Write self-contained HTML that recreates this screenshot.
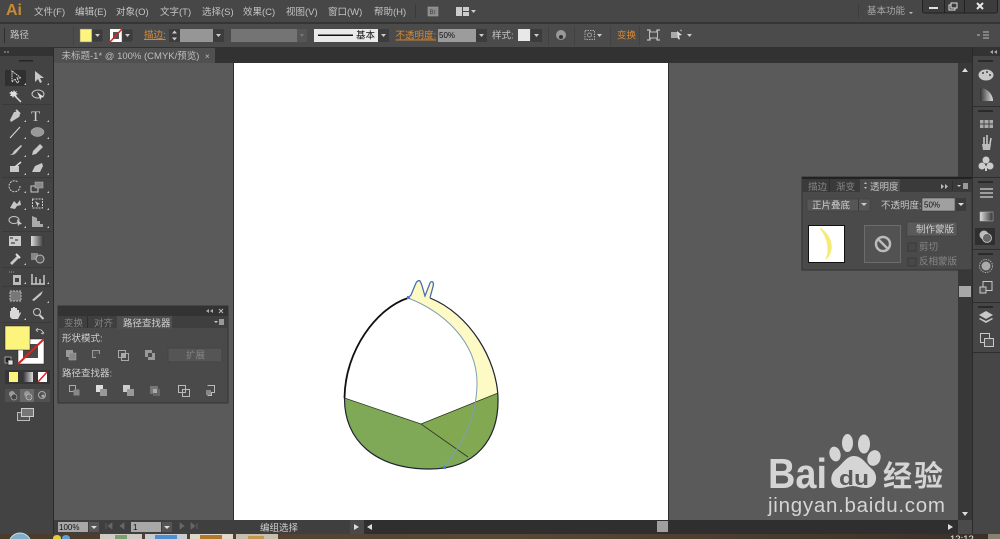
<!DOCTYPE html>
<html><head><meta charset="utf-8">
<style>
html,body{margin:0;padding:0;background:#5a5a5a;overflow:hidden}
svg{display:block;filter:blur(.35px)}
text{font-family:"Liberation Sans","Noto Sans CJK SC",sans-serif;font-size:9.5px;fill:#c4c4c4}
.o{fill:#d88a35}
.d{fill:#858585}
.b{fill:#111}
.i{fill:none;stroke:#c8c8c8;stroke-width:1}
.f{fill:#c8c8c8;stroke:none}
.g{fill:#8a8a8a;stroke:none}
.ln{stroke:#353535;stroke-width:1}
</style></head>
<body>
<svg width="1000" height="539" viewBox="0 0 1000 539" xmlns="http://www.w3.org/2000/svg">
<defs><linearGradient id="gr" x1="0" x2="1"><stop offset="0" stop-color="#333"/><stop offset="1" stop-color="#ddd"/></linearGradient>
<linearGradient id="tb" x1="0" x2="1"><stop offset="0" stop-color="#4a3a2c"/><stop offset=".5" stop-color="#5a4836"/><stop offset="1" stop-color="#3a3028"/></linearGradient></defs>
<!-- base -->
<rect width="1000" height="539" fill="#5a5a5a"/>
<rect width="1000" height="22" fill="#474747"/>
<rect y="22" width="1000" height="2" fill="#353535"/>
<rect y="24" width="1000" height="23" fill="#4b4b4b"/>
<rect y="47" width="1000" height="16" fill="#323232"/>
<!-- menu -->
<text x="6" y="15" style="font-size:16px;font-weight:bold;fill:#c88a35">Ai</text>
<text x="34" y="15">文件(F)</text><text x="75" y="15">编辑(E)</text><text x="116" y="15">对象(O)</text><text x="160" y="15">文字(T)</text><text x="202" y="15">选择(S)</text><text x="243" y="15">效果(C)</text><text x="286" y="15">视图(V)</text><text x="328" y="15">窗口(W)</text><text x="374" y="15">帮助(H)</text>
<rect x="415" y="4" width="1" height="14" fill="#3a3a3a"/>
<rect x="428" y="7" width="10" height="9" fill="#8a8a8a" stroke="#aaa" stroke-width=".5"/>
<text x="429.500" y="14" style="font-size:6px;fill:#444">Br</text>
<rect x="456" y="7" width="6" height="9" fill="#ccc"/><rect x="463" y="7" width="6" height="4" fill="#ccc"/><rect x="463" y="12" width="6" height="4" fill="#ccc"/>
<path d="M471 10h5l-2.500 3z" fill="#ccc"/>
<rect x="858" y="4" width="1" height="14" fill="#3d3d3d"/>
<text x="867" y="14" style="fill:#a8a8a8">基本功能</text>
<path d="M909 12h4l-2 2z" fill="#bbb"/>
<rect x="922.500" y="-2" width="75" height="15" rx="2" fill="#3c3c3c" stroke="#222"/>
<rect x="929" y="7" width="9" height="2" fill="#e0e0e0"/>
<rect x="949" y="5" width="6" height="5" fill="none" stroke="#e0e0e0"/><rect x="951" y="3" width="6" height="5" fill="#3c3c3c" stroke="#e0e0e0"/>
<path d="M977 3l6 6M983 3l-6 6" stroke="#e8e8e8" stroke-width="2"/>
<rect x="944" y="0" width="1" height="13" fill="#222"/><rect x="964" y="0" width="1" height="13" fill="#222"/>
<!-- control bar -->
<rect x="4" y="28" width="1" height="15" fill="#2e2e2e"/>
<text x="10" y="38">路径</text>
<rect x="73" y="26" width="1" height="20" fill="#424242"/>
<rect x="80" y="29" width="12" height="13" fill="#fdf47e" stroke="#777" stroke-width=".5"/>
<rect x="92" y="29" width="11" height="13" fill="#3c3c3c" stroke="#555" stroke-width=".5"/><path d="M95 34h5l-2.500 3z" fill="#ccc"/>
<rect x="110" y="29" width="12" height="13" fill="#fff"/><rect x="113" y="32" width="6" height="7" fill="#555"/><path d="M110 42l12-13" stroke="#d22" stroke-width="1.500"/>
<rect x="122" y="29" width="11" height="13" fill="#3c3c3c" stroke="#555" stroke-width=".5"/><path d="M125 34h5l-2.500 3z" fill="#ccc"/>
<text x="144" y="38" class="o" text-decoration="underline">描边:</text>
<rect x="169" y="29" width="11" height="13" fill="#3c3c3c"/><path d="M172 33.500h5l-2.500-3zM172 37.500h5l-2.500 3z" fill="#ccc"/>
<rect x="180" y="29" width="33" height="13" fill="#969696"/>
<rect x="213" y="29" width="11" height="13" fill="#3c3c3c"/><path d="M216 34h5l-2.500 3z" fill="#ccc"/>
<rect x="231" y="29" width="66" height="13" fill="#747474"/>
<rect x="297" y="29" width="10" height="13" fill="#555"/><path d="M300 34h4l-2 3z" fill="#777"/>
<rect x="314" y="29" width="64" height="13" fill="#eaeaea"/>
<rect x="318" y="34.500" width="35" height="1.500" fill="#111"/>
<text x="356" y="38.500" class="b">基本</text>
<rect x="378" y="29" width="11" height="13" fill="#3c3c3c"/><path d="M381 34h5l-2.500 3z" fill="#ccc"/>
<text x="395.500" y="38.500" class="o" text-decoration="underline">不透明度:</text>
<rect x="438" y="29" width="38" height="13" fill="#9c9c9c"/><text x="439" y="38" style="font-size:8px;fill:#111">50%</text>
<rect x="476" y="29" width="11" height="13" fill="#3c3c3c"/><path d="M479 34h5l-2.500 3z" fill="#ccc"/>
<text x="492" y="38.500">样式:</text>
<rect x="518" y="29" width="12" height="12" fill="#e8e8e8"/>
<rect x="531" y="29" width="11" height="13" fill="#3c3c3c"/><path d="M534 34h5l-2.500 3z" fill="#ccc"/>
<rect x="548" y="26" width="1" height="20" fill="#424242"/>
<circle cx="561" cy="35" r="5" fill="#999"/><circle cx="561" cy="37" r="2" fill="#333"/>
<rect x="574" y="26" width="1" height="20" fill="#424242"/>
<rect x="585" y="30.500" width="9.500" height="9" fill="none" stroke="#aaa" stroke-dasharray="1.500 1"/><circle cx="589.500" cy="35" r="2" fill="none" stroke="#999"/>
<path d="M597 34h5l-2.500 3z" fill="#ccc"/>
<rect x="610" y="26" width="1" height="20" fill="#424242"/>
<text x="617" y="38.500" class="o">变换</text>
<rect x="639" y="26" width="1" height="20" fill="#424242"/>
<rect x="649.500" y="32" width="8" height="6" fill="none" stroke="#bbb"/><path d="M647 30h3v2M660 30h-3v2M647 40h3v-2M660 40h-3v-2" fill="none" stroke="#ddd"/>
<rect x="671" y="32" width="7" height="6" fill="#aaa"/><path d="M677 31l5 4-3 .500 1 4-2-.500z" fill="#ddd"/><path d="M680 30l2 1" stroke="#aaa"/>
<path d="M687 34h5l-2.500 3z" fill="#ccc"/>
<path d="M977 35h3M983 32h6M983 35h6M983 38h6" stroke="#bbb" stroke-width="1"/>
<!-- tab -->
<rect x="54" y="48" width="161" height="15" fill="#505050"/>
<text x="61.500" y="59" style="fill:#bdbdbd">未标题-1* @ 100% (CMYK/预览)</text>
<text x="205" y="59" style="font-size:8px">×</text>
<!-- left toolbar -->
<rect x="0" y="47" width="53" height="487" fill="#434343"/>
<rect x="0" y="47" width="53" height="9" fill="#333"/>
<path d="M6 52l-2 0M9 52l-2 0" stroke="#aaa"/>
<rect x="19" y="60" width="14" height="1.500" fill="#252525"/>
<rect x="53" y="47" width="1" height="487" fill="#2a2a2a"/>
<rect x="5" y="70" width="21" height="16" fill="#303030"/>
<!-- selection -->
<path d="M12 71v11l3-3 2 4 2-1-2-4h4z" fill="none" stroke="#ddd" stroke-dasharray="1.500 .7"/>
<path d="M35 71v11l3-3 2 4 2-1-2-4h4z" fill="#c8c8c8"/>
<path d="M11 91l2 1 1-2 1 2 2-1-1 2 2 1-2 1 1 2-3-1-1 2-1-2-2 0 1-2-2-1 2-1z" fill="#ddd"/><path d="M15 96l6 6" stroke="#ddd" stroke-width="1.500"/>
<ellipse cx="38" cy="94" rx="6" ry="4" class="i"/><path d="M37 92l7 5-3 .500 0 3z" fill="#ddd"/>
<path d="M10 120l4-8 3 0 3 3-1 2-8 5z" class="f"/><path d="M16 110l4 4" stroke="#ccc" stroke-width="2"/>
<text x="31" y="121" style="font-family:'Liberation Serif',serif;font-size:15px;fill:#cfcfcf">T</text>
<path d="M10 138l10-11" stroke="#ddd"/>
<ellipse cx="37.500" cy="132" rx="6.500" ry="4.500" fill="#999" stroke="#bbb" stroke-width=".5"/>
<path d="M9 155c3 0 4-2 5-4l7-6 1 1-6 7c-2 2-4 2-7 2z" class="f"/>
<path d="M32 155l1-4 7-7 3 3-7 7z" class="f"/>
<path d="M10 166h9v6h-9z" class="f"/><path d="M15 167l6-5" stroke="#ddd" stroke-width="1.500"/>
<path d="M32 172l3-6 7-3 1 3-3 6z" class="f"/>
<path d="M20 186a5.500 5.500 0 1 1-2-4" fill="none" stroke="#ccc" stroke-dasharray="2 1"/>
<rect x="31" y="186" width="7" height="6" class="i"/><rect x="35" y="182" width="8" height="6" fill="#888" stroke="#bbb" stroke-width=".5"/>
<path d="M10 208l4-7 3 3 3-4 1 5-4 1-2 3z" class="f"/>
<rect x="32.500" y="199" width="10" height="9" fill="none" stroke="#ccc" stroke-dasharray="2 1"/><path d="M35 201l5 3-2 .500 0 3z" fill="#ccc"/>
<ellipse cx="14" cy="220" rx="5" ry="3.500" class="i"/><path d="M17 219l5 5-3 .500-1 2z" class="f"/>
<path d="M32 216v11h11v-3h-3v-3h-3v-3z" fill="#aaa"/>
<rect x="9" y="236" width="12" height="10" fill="#ccc"/><path d="M10 238h3M15 240h3M11 243h4" stroke="#444" stroke-width="1.200"/>
<rect x="31" y="236" width="13" height="10" fill="url(#gr)" transform="rotate(180 37.500 241)"/>
<path d="M10 263l7-7 2 2-7 7z" class="f"/><path d="M16 254l4 4" stroke="#ddd" stroke-width="2"/>
<rect x="31" y="253" width="7" height="7" fill="#888"/><circle cx="40" cy="259" r="4" fill="#555" stroke="#bbb"/>
<rect x="13" y="275" width="8" height="10" fill="#bbb"/><rect x="15" y="278" width="4" height="4" fill="#444"/><path d="M9 272h6" stroke="#999" stroke-dasharray="1 1"/>
<path d="M32 284v-10M36 284v-7M40 284v-5M44 284v-9M31 284h14" stroke="#c8c8c8" stroke-width="1.500"/>
<rect x="10" y="291" width="11" height="10" fill="#777" stroke="#bbb" stroke-dasharray="2 1"/>
<path d="M32 300l8-7 3-2-2 4-7 6z" class="f"/>
<path d="M10 317v-6l1 0v-3l2 0v-1l2 0 0 1 2 0v2l2 0v4l1-2 1 1-3 6h-6z" fill="#d8d8d8"/>
<circle cx="37" cy="312" r="3.500" class="i"/><path d="M39.500 315l4 4" stroke="#ccc" stroke-width="2"/>
<g fill="#ccc"><path d="M24 85l2 0v-2zM47 85l2 0v-2zM24 122l2 0v-2zM47 122l2 0v-2zM24 139l2 0v-2zM47 139l2 0v-2zM24 157l2 0v-2zM47 157l2 0v-2zM24 175l2 0v-2zM47 175l2 0v-2zM24 193l2 0v-2zM47 193l2 0v-2zM24 210l2 0v-2zM47 210l2 0v-2zM24 228l2 0v-2zM47 228l2 0v-2zM24 265l2 0v-2zM24 284l2 0v-2zM47 284l2 0v-2zM47 303l2 0v-2zM24 320l2 0v-2z"/></g>
<g fill="#3a3a3a"><rect x="2" y="104" width="50" height="1"/><rect x="2" y="177" width="50" height="1"/><rect x="2" y="231" width="50" height="1"/><rect x="2" y="267" width="50" height="1"/><rect x="2" y="286" width="50" height="1"/><rect x="2" y="322" width="50" height="1"/></g>
<!-- colors -->
<rect x="18" y="339" width="26" height="25" fill="#fff" stroke="#222" stroke-width=".5"/>
<rect x="23" y="344" width="15" height="14" fill="#4a4a4a"/>
<path d="M18 364l26-25" stroke="#d22" stroke-width="2"/>
<rect x="5" y="326" width="25" height="24" fill="#fdf47e" stroke="#222" stroke-width=".5"/>
<path d="M37 330a4 4 0 0 1 6 4M38 328l-2 2 2 2M44 332l-1 2-2-1" fill="none" stroke="#ccc" stroke-width=".8"/>
<rect x="5" y="357" width="6" height="6" fill="#222" stroke="#ccc" stroke-width=".7"/><rect x="8" y="360" width="5" height="5" fill="#ddd" stroke="#222" stroke-width=".7"/>
<rect x="5" y="370" width="45" height="14" fill="#363636"/>
<rect x="9" y="372" width="9" height="10" fill="#fdf47e"/>
<rect x="23" y="372" width="10" height="10" fill="url(#gr)"/>
<rect x="38" y="372" width="9" height="10" fill="#fff"/><path d="M38 382l9-10" stroke="#d22" stroke-width="1.500"/>
<rect x="5" y="389" width="45" height="13" fill="#505050"/>
<rect x="20" y="389" width="14" height="13" fill="#6a6a6a"/>
<circle cx="12" cy="394" r="3" fill="#999"/><circle cx="14" cy="397" r="3" fill="#444" stroke="#bbb" stroke-width=".6"/>
<circle cx="27" cy="394" r="3" fill="#999"/><circle cx="29" cy="397" r="3" fill="#777" stroke="#ccc" stroke-width=".6"/>
<circle cx="42" cy="395" r="3.500" fill="none" stroke="#aaa"/><circle cx="43" cy="396" r="1.500" fill="#aaa"/>
<rect x="17.500" y="412.500" width="12" height="8" fill="#555" stroke="#bbb"/><rect x="21.500" y="408.500" width="12" height="8" fill="#777" stroke="#ccc"/>
<!-- artboard -->
<rect x="234" y="63" width="434" height="457" fill="#fff"/>
<rect x="233" y="63" width="1" height="457" fill="#2e2e2e"/><rect x="668" y="63" width="1" height="457" fill="#2e2e2e"/>
<!-- illustration -->
<path d="M408 298C440 310 478 340 477 385L476 404 498 393C497 360 470 314 430 298C431 293 433 288 433.500 284C433 281 431 281 430 283L425 296C423 290 422 284 420 281C418 280 417 281 416 283L411 295z" fill="#fefac6"/>
<path d="M344.500 386L344.500 398 421 424 498 393C500 440 475 469 430 469C375 469 343 440 344.500 398z" fill="#7fa857"/>
<path d="M421 424L498 393C500 430 487 447 468 457z" fill="#82a852"/>
<path d="M344.500 398L421 424 468 457M421 424L498 393" fill="none" stroke="#2c3a20" stroke-width=".8"/>
<path d="M408 298C377 308 345 350 344.500 398" fill="none" stroke="#111" stroke-width="1.800"/>
<path d="M344.500 398C344 440 375 469 430 469C475 469 499 440 498 398C497 360 470 314 430 298" fill="none" stroke="#1c2430" stroke-width="1.200"/>
<path d="M408 298L411 295 416 283C417 281 419 280 420 281C422 284 423 290 425 296L430 283C431 281 433 281 433.500 284C433 288 431 293 430 298" fill="none" stroke="#4a6fb0" stroke-width="1.300"/>
<path d="M408 298C440 310 478 340 477 385C476 420 462 445 444 467" fill="none" stroke="#7d9fb5" stroke-width="1"/>
<rect x="407" y="296" width="3" height="3" fill="#4a7ad8"/><rect x="443" y="466" width="3" height="3" fill="#4a7ad8"/>
<!-- vertical scroll -->
<rect x="958" y="63" width="14" height="457" fill="#383838"/>
<path d="M962 72l3-4 3 4z" fill="#ddd"/><path d="M962 512l3 4 3-4z" fill="#ddd"/>
<rect x="959" y="286" width="12" height="11" fill="#a8a8a8"/>
<!-- right dock -->
<rect x="972" y="47" width="28" height="487" fill="#464646"/>
<rect x="972" y="47" width="28" height="9" fill="#333"/>
<path d="M990 52l3-2v4zM994 52l3-2v4z" fill="#aaa"/>
<rect x="972" y="47" width="1" height="487" fill="#2a2a2a"/>
<g fill="#2e2e2e"><rect x="973" y="106" width="27" height="1"/><rect x="973" y="177" width="27" height="1"/><rect x="973" y="249" width="27" height="1"/><rect x="973" y="302" width="27" height="1"/><rect x="973" y="352" width="27" height="1"/></g>
<g fill="#2a2a2a"><rect x="978" y="60" width="15" height="2"/><rect x="978" y="110" width="15" height="2"/><rect x="978" y="181" width="15" height="2"/><rect x="978" y="253" width="15" height="2"/><rect x="978" y="306" width="15" height="2"/></g>
<ellipse cx="986" cy="75" rx="7.500" ry="5.500" fill="#c8c8c8"/><g fill="#444"><circle cx="983" cy="73" r="1"/><circle cx="987" cy="72" r="1"/><circle cx="990" cy="75" r="1"/></g>
<path d="M980 88c7 0 13 6 13 13h-13z" fill="url(#gr)"/>
<rect x="980" y="120" width="13" height="8" fill="#aaa"/><path d="M984 120v8M989 120v8M980 124h13" stroke="#444"/>
<path d="M983 150h7l1-6h-9z" fill="#bbb"/><path d="M984 144v-7M987 144v-9M990 144l1-6" stroke="#ccc" stroke-width="1.500"/>
<circle cx="986" cy="160" r="3.500" fill="#ccc"/><circle cx="982" cy="166" r="3.500" fill="#ccc"/><circle cx="990" cy="166" r="3.500" fill="#ccc"/><rect x="985" y="166" width="2" height="5" fill="#ccc"/>
<path d="M980 189h13M980 193h13M980 197h13" stroke="#bbb" stroke-width="1.500"/>
<rect x="980" y="212" width="13" height="9" fill="url(#gr)" transform="rotate(180 986.500 216.500)" stroke="#bbb" stroke-width=".5"/>
<rect x="975" y="228" width="20" height="17" fill="#2f2f2f"/>
<circle cx="984" cy="235" r="4.500" fill="#bbb"/><circle cx="987" cy="238" r="4.500" fill="#666" stroke="#ccc" stroke-width=".8"/>
<circle cx="986" cy="266" r="4.500" fill="#aaa"/><circle cx="986" cy="266" r="6.500" fill="none" stroke="#aaa" stroke-dasharray="1.500 1"/>
<rect x="983" y="281.500" width="9" height="9" class="i"/><rect x="980" y="287" width="6" height="6" fill="#555" stroke="#ccc"/>
<path d="M986 311l7 4-7 4-7-4z" fill="#c8c8c8"/><path d="M979 319l7 4 7-4-1-1-6 3-6-3z" fill="#c8c8c8"/>
<rect x="980.500" y="333.500" width="9" height="9" class="i"/><rect x="984.500" y="338.500" width="9" height="8" fill="#555" stroke="#c8c8c8"/>
<!-- transparency panel -->
<rect x="802" y="177" width="170" height="93" fill="#4a4a4a" stroke="#333"/>
<rect x="802" y="177" width="170" height="2" fill="#222"/>
<rect x="802" y="179" width="170" height="13" fill="#3a3a3a"/>
<rect x="860" y="179" width="40" height="14" fill="#4a4a4a"/>
<rect x="829" y="179" width="1" height="13" fill="#2e2e2e"/>
<text x="808" y="190" class="d">描边</text><text x="836" y="190" class="d">渐变</text>
<text x="870" y="190" style="fill:#c4c4c4">透明度</text>
<path d="M864 184l1.500-2 1.500 2zM864 187l1.500 2 1.500-2z" fill="#bbb"/>
<path d="M941 184l3 2.500-3 2.500zM945 184l3 2.500-3 2.500z" fill="#bbb"/>
<rect x="952" y="181" width="1" height="9" fill="#2e2e2e"/>
<path d="M957 185h4l-2 2z" fill="#ccc"/><rect x="963" y="183" width="5" height="6" fill="#999"/>
<rect x="807" y="199" width="63" height="12" fill="#565656" stroke="#3a3a3a" stroke-width=".5"/>
<text x="812" y="208.500" style="fill:#d0d0d0">正片叠底</text>
<rect x="858" y="199" width="1" height="12" fill="#3a3a3a"/><path d="M861 203h6l-3 3z" fill="#ccc"/>
<text x="881" y="208.500">不透明度:</text>
<rect x="922" y="198" width="33" height="13" fill="#a0a0a0" stroke="#333" stroke-width=".5"/><text x="924" y="207.500" style="font-size:8px;fill:#111">50%</text>
<rect x="956" y="198" width="10" height="13" fill="#3c3c3c"/><path d="M958 203h6l-3 3z" fill="#ddd"/>
<rect x="808.500" y="225.500" width="36" height="37" fill="#fff" stroke="#111"/>
<path d="M820 228C832 236 835 250 826 259C830 250 828 238 820 228z" fill="#f5ec78" stroke="#f5ec78"/>
<rect x="864.500" y="225.500" width="36" height="37" fill="#525252" stroke="#6c6c6c"/>
<circle cx="883" cy="244" r="7" fill="none" stroke="#bbb" stroke-width="2.500"/><path d="M878 239l10 10" stroke="#bbb" stroke-width="2.500"/>
<rect x="907" y="222" width="50" height="14" fill="#5a5a5a" stroke="#3a3a3a" stroke-width=".5"/>
<text x="916" y="232.500" style="fill:#d0d0d0">制作蒙版</text>
<rect x="908" y="243" width="8" height="8" fill="#484848" stroke="#3a3a3a"/>
<rect x="908" y="258" width="8" height="8" fill="#484848" stroke="#3a3a3a"/>
<text x="919" y="250" class="d">剪切</text><text x="919" y="264.500" class="d">反相蒙版</text>
<!-- pathfinder panel -->
<rect x="58" y="306" width="170" height="97" fill="#4a4a4a" stroke="#333"/>
<rect x="58" y="306" width="170" height="10" fill="#333"/>
<rect x="58" y="316" width="170" height="12" fill="#3f3f3f"/>
<rect x="117" y="316" width="55" height="13" fill="#4f4f4f"/>
<rect x="87" y="316" width="1" height="12" fill="#2e2e2e"/>
<path d="M206 311l3-2v4zM210 311l3-2v4z" fill="#aaa"/><path d="M219 309l4 4M223 309l-4 4" stroke="#bbb"/>
<text x="64" y="326.500" class="d">变换</text><text x="94" y="326.500" class="d">对齐</text><text x="123" y="326.500" style="fill:#cfcfcf">路径查找器</text>
<path d="M214 321h4l-2 2z" fill="#ccc"/><rect x="219" y="319" width="5" height="6" fill="#999"/>
<text x="62" y="341.500" style="fill:#cfcfcf">形状模式:</text>
<rect x="66" y="350" width="7" height="7" fill="#999"/><rect x="69" y="353" width="7" height="7" fill="#888" stroke="#aaa" stroke-width=".5"/>
<rect x="92.500" y="350.500" width="7" height="7" fill="#555" stroke="#999"/><rect x="96" y="354" width="7" height="7" fill="#4a4a4a"/>
<rect x="118.500" y="350.500" width="7" height="7" fill="none" stroke="#aaa"/><rect x="121.500" y="353.500" width="7" height="7" fill="none" stroke="#aaa"/><rect x="121.500" y="353.500" width="4" height="4" fill="#aaa"/>
<rect x="145" y="350" width="7" height="7" fill="#999"/><rect x="148" y="353" width="7" height="7" fill="#999"/><rect x="148" y="353" width="4" height="4" fill="#4a4a4a"/>
<rect x="168" y="348" width="54" height="14" fill="#555" stroke="#444"/>
<text x="186" y="358.500" class="d">扩展</text>
<text x="62" y="376.500" style="fill:#cfcfcf">路径查找器:</text>
<g><rect x="69.500" y="385.500" width="6" height="6" fill="none" stroke="#aaa"/><rect x="73.500" y="389.500" width="6" height="6" fill="#888"/>
<rect x="96" y="385" width="7" height="7" fill="#ddd"/><rect x="100" y="389" width="7" height="7" fill="#999"/>
<rect x="123" y="385" width="7" height="7" fill="#ccc"/><rect x="127" y="389" width="7" height="7" fill="#999"/>
<rect x="150" y="386" width="8" height="8" fill="#777"/><rect x="153" y="389" width="7" height="7" fill="#666"/><rect x="153" y="389" width="4" height="4" fill="#aaa"/>
<rect x="178.500" y="385.500" width="7" height="7" fill="none" stroke="#bbb"/><rect x="182.500" y="389.500" width="7" height="7" fill="none" stroke="#bbb"/>
<path d="M207.500 385.500h7v7h-3v3h-4" fill="none" stroke="#bbb"/><rect x="206" y="390" width="5" height="5" fill="#888"/></g>
<!-- watermark -->
<text x="768" y="488" textLength="59" lengthAdjust="spacingAndGlyphs" style="font-size:42px;font-weight:bold;fill:#d5d5d5">Bai</text>
<g fill="#d5d5d5">
<ellipse cx="835" cy="454" rx="5.500" ry="7.500" transform="rotate(-15 835 454)"/>
<ellipse cx="847.500" cy="443" rx="5.500" ry="9"/>
<ellipse cx="864" cy="444" rx="6" ry="9.500"/>
<ellipse cx="874" cy="458" rx="6.500" ry="8" transform="rotate(20 874 458)"/>
<path d="M854 456C862 456 866 464 872 469C879 475 877 488 866 488C860 488 857 486 853 486C848 486 845 488 840 488C830 488 829 476 835 470C842 465 846 456 854 456z"/>
</g>
<text x="839" y="485" textLength="30" lengthAdjust="spacingAndGlyphs" style="font-size:20px;font-weight:bold;fill:#5a5a5a">du</text>
<text x="883" y="486" textLength="60" style="font-size:29px;font-weight:bold;fill:#d5d5d5">经验</text>
<text x="768" y="512" textLength="177" style="font-size:20.500px;fill:#d5d5d5">jingyan.baidu.com</text>
<!-- status bar -->
<rect x="54" y="520" width="918" height="14" fill="#3f3f3f"/>
<rect x="0" y="520" width="54" height="14" fill="#434343"/>
<rect x="53" y="520" width="1" height="14" fill="#2a2a2a"/>
<rect x="58" y="522" width="30" height="10" fill="#a8a8a8"/><text x="59" y="530" style="font-size:8px;fill:#111">100%</text>
<rect x="89" y="522" width="10" height="10" fill="#555"/><path d="M91 526h6l-3 3z" fill="#ddd"/>
<path d="M106 523v6M112 523l-4 3 4 3zM124 523l-4 3 4 3z" fill="#666" stroke="#666" stroke-width=".8"/>
<rect x="131" y="522" width="30" height="10" fill="#a8a8a8"/><text x="133" y="530" style="font-size:8px;fill:#111">1</text>
<rect x="162" y="522" width="10" height="10" fill="#555"/><path d="M164 526h6l-3 3z" fill="#ddd"/>
<path d="M180 523l4 3-4 3zM191 523l4 3-4 3zM197 523v6" fill="#666" stroke="#666" stroke-width=".8"/>
<text x="260" y="531" style="fill:#cfcfcf">编组选择</text>
<rect x="350" y="520" width="14" height="14" fill="#4a4a4a"/>
<path d="M354 524l5 3-5 3z" fill="#ddd"/>
<rect x="364" y="520" width="594" height="14" fill="#2f2f2f"/>
<path d="M372 524l-5 3 5 3z" fill="#ddd"/>
<rect x="657" y="521" width="11" height="11" fill="#a0a0a0"/>
<path d="M948 524l5 3-5 3z" fill="#ddd"/>
<rect x="958" y="520" width="14" height="14" fill="#4a4a4a"/>
<!-- taskbar -->
<rect y="534" width="1000" height="5" fill="url(#tb)"/>
<circle cx="20" cy="544" r="11" fill="#7fb0c8" stroke="#cde"/>
<ellipse cx="57" cy="538" rx="4" ry="3" fill="#e0d040"/><ellipse cx="66" cy="538" rx="4" ry="3" fill="#60a0d0"/>
<rect x="100" y="534" width="42" height="5" fill="#cfcac2"/><rect x="115" y="535" width="12" height="4" fill="#7aa070"/>
<rect x="145" y="534" width="42" height="5" fill="#c8ccd0"/><rect x="155" y="535" width="22" height="4" fill="#4a90d0"/>
<rect x="190" y="534" width="43" height="5" fill="#e0d8c8"/><rect x="200" y="535" width="22" height="4" fill="#b07828"/>
<rect x="236" y="534" width="42" height="5" fill="#c8beb0"/><rect x="248" y="536" width="16" height="3" fill="#c09850"/>
<text x="950" y="542" style="fill:#eee">12:12</text>
<rect x="988" y="534" width="12" height="5" fill="#8a8070"/>
</svg>
</body></html>
